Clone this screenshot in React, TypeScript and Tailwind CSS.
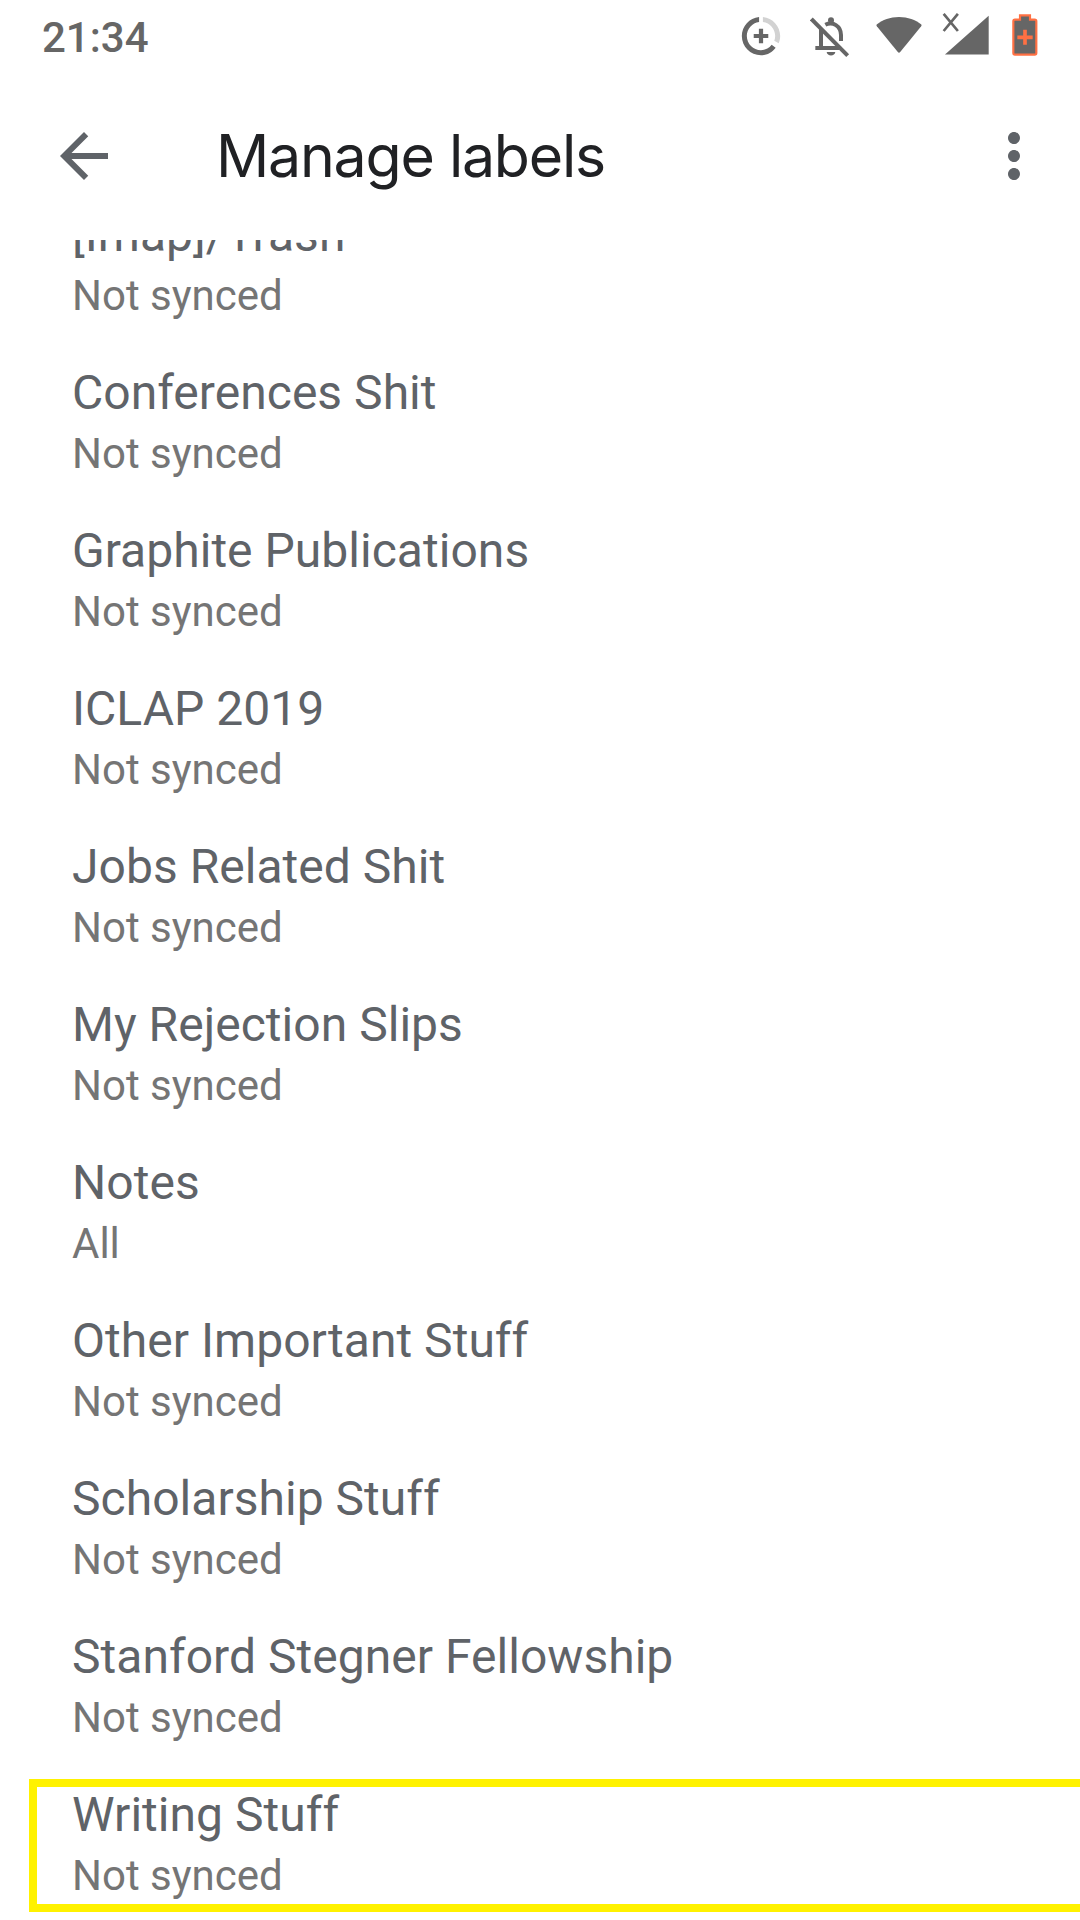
import React from 'react';
import { MdArrowBack, MdMoreVert } from 'react-icons/md';

interface Label {
  name: string;
  sync: string;
  highlighted?: boolean;
}

const labels: Label[] = [
  { name: '[Imap]/Trash', sync: 'Not synced' },
  { name: 'Conferences Shit', sync: 'Not synced' },
  { name: 'Graphite Publications', sync: 'Not synced' },
  { name: 'ICLAP 2019', sync: 'Not synced' },
  { name: 'Jobs Related Shit', sync: 'Not synced' },
  { name: 'My Rejection Slips', sync: 'Not synced' },
  { name: 'Notes', sync: 'All' },
  { name: 'Other Important Stuff', sync: 'Not synced' },
  { name: 'Scholarship Stuff', sync: 'Not synced' },
  { name: 'Stanford Stegner Fellowship', sync: 'Not synced' },
  { name: 'Writing Stuff', sync: 'Not synced', highlighted: true },
];

const DataSaverIcon = () => (
  <svg viewBox="0 0 24 24" className="w-[46px] h-[46px]" fill="#666666">
    <path
      fill="#d2d2d2"
      d="M13 2.05v2.6c3.7.49 6.4 3.6 6.4 7.35 0 .9-.18 1.75-.48 2.54l2.3 1.3c.5-1.24.78-2.4.78-3.84 0-5.18-3.95-9.45-9-9.95z"
    />
    <path d="M12 19.4c-4.07 0-7.4-3.33-7.4-7.4 0-3.73 2.81-6.83 6.4-7.35v-2.6c-5.06.5-9 4.76-9 9.95 0 5.52 4.47 10 9.99 10 3.21 0 5.84-1.41 7.66-3.89l-2.1-1.53C16.17 18.38 14.21 19.4 12 19.4z" />
    <path d="M13.1 8.2h-2.2v2.7H8.2v2.2h2.7v2.7h2.2v-2.7h2.7v-2.2h-2.7z" />
  </svg>
);

const BellOffIcon = () => (
  <svg viewBox="270 45 120 129" className="w-[40px] h-[43px]" fill="none" stroke="#666666">
    <path strokeWidth="12" d="M303 86V143M286 144H358M316 74C338 63 363 78 363 105V123" />
    <circle cx="333" cy="61" r="9" fill="#666666" stroke="none" />
    <path d="M320 156H346C345 170 321 170 320 156Z" fill="#666666" stroke="none" />
    <path strokeWidth="12" d="M274 57L383 167" />
  </svg>
);

const WifiIcon = () => (
  <svg viewBox="0 0 46 36" className="w-[46px] h-[36px]" fill="#666666">
    <path d="M23 0C14 0 6.500 3 1 7.200Q0 8 .800 9.200L21.800 35Q23 36.300 24.200 35L45.200 9.200Q46 8 45 7.200C39.500 3 32 0 23 0Z" />
  </svg>
);

const SignalIcon = () => (
  <svg viewBox="126 40 142 126" className="w-[47px] h-[42px]" fill="#666666">
    <path d="M267 48V165H135Z" />
    <path d="M131 42L174 94M174 42L131 94" stroke="#666666" strokeWidth="8" />
  </svg>
);

const BatteryIcon = () => (
  <svg viewBox="336 43 78 126" className="w-[26px] h-[42px]">
    <path
      d="M360 47H390V60H404Q409 60 409 65V160Q409 165 404 165H345Q340 165 340 160V65Q340 60 345 60H360Z"
      fill="#666666"
      stroke="#ff7043"
      strokeWidth="6.500"
    />
    <path d="M375 90V135M352 113H398" stroke="#ff7043" strokeWidth="11" />
  </svg>
);

const StatusBar = () => (
  <div className="h-[72px] flex items-start justify-between pl-[42px] pr-[42px] text-[#666666]">
    <span className="mt-[13px] text-[42px] leading-[49px] font-medium">21:34</span>
    <div className="flex items-start">
      <div className="mt-[13px]">
        <DataSaverIcon />
      </div>
      <div className="mt-[15px] ml-[26px]">
        <BellOffIcon />
      </div>
      <div className="mt-[17px] ml-[26px]">
        <WifiIcon />
      </div>
      <div className="mt-[13px] ml-[20px]">
        <SignalIcon />
      </div>
      <div className="mt-[14px] ml-[23px]">
        <BatteryIcon />
      </div>
    </div>
  </div>
);

const LabelRow: React.FC<{ label: Label }> = ({ label }) => (
  <li
    className={
      label.highlighted
        ? '-mt-2 ml-[29px] h-[133px] border-8 border-r-0 border-[#fff200] pl-[35px]'
        : 'h-[158px] pl-[72px]'
    }
  >
    <div className="text-[48px] leading-[56px] tracking-[0.03px] text-[#5f6368]">{label.name}</div>
    <div className="mt-2 text-[42px] leading-[50px] text-[#757575]">{label.sync}</div>
  </li>
);

export default function App() {
  return (
    <div className="w-[1080px] h-[1920px] overflow-hidden bg-white font-[Roboto,sans-serif] flex flex-col">
      <StatusBar />
      <header className="h-[168px] shrink-0 flex items-center pl-[48px] pr-[30px] text-[#5f6368]">
        <button aria-label="Back">
          <MdArrowBack className="w-[72px] h-[72px]" />
        </button>
        <h1 className="ml-[96px] text-[59px] leading-[72px] text-[#202124] font-[Inter,sans-serif] tracking-[-0.021em]">
          Manage labels
        </h1>
        <button className="ml-auto" aria-label="More options">
          <MdMoreVert className="w-[72px] h-[72px]" />
        </button>
      </header>
      <main className="flex-1 overflow-hidden">
        <ul className="-mt-[33px]">
          {labels.map((label) => (
            <LabelRow key={label.name} label={label} />
          ))}
        </ul>
      </main>
    </div>
  );
}
